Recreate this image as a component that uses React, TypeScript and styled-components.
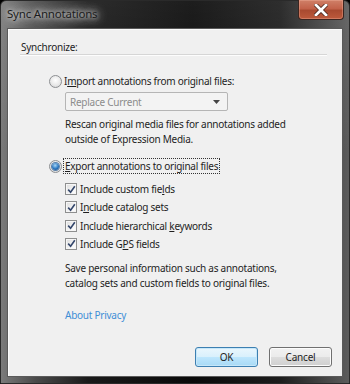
import styled, { createGlobalStyle } from 'styled-components';

const GlobalStyle = createGlobalStyle`
  html, body {
    margin: 0;
    padding: 0;
    overflow: hidden;
    background: #000;
  }
  * {
    box-sizing: border-box;
  }
`;

const FONT = `"Noto Sans", "Open Sans", sans-serif`;

export default function App() {
  return (
    <>
      <GlobalStyle />
      <StyledWindow>
        <StyledTitleBar>
          <StyledTitle>Sync Annotations</StyledTitle>
          <StyledCloseButton aria-label="Close">
            <svg width="14" height="12" viewBox="0 0 14 12">
              <path
                d="M2 1 L12 11 M12 1 L2 11"
                stroke="#3a1a12"
                strokeWidth="4.2"
                strokeLinecap="square"
              />
              <path
                d="M2 1 L12 11 M12 1 L2 11"
                stroke="#fff"
                strokeWidth="2.8"
                strokeLinecap="square"
              />
            </svg>
          </StyledCloseButton>
        </StyledTitleBar>

        <StyledClient>
          <StyledHeading>Synchronize:</StyledHeading>
          <StyledSeparator />

          <StyledOptionRow $top={18}>
            <Radio checked={false} />
            <StyledLabel>
              I<u>m</u>port annotations from original files:
            </StyledLabel>
          </StyledOptionRow>

          <StyledIndented>
            <StyledSelect>
              <span>Replace Current</span>
              <svg width="7" height="4" viewBox="0 0 7 4">
                <path d="M0 0 H7 L3.5 4 Z" fill="#444" />
              </svg>
            </StyledSelect>
            <StyledHelp $top={6}>
              Rescan original media files for annotations added
              <br />
              outside of Expression Media.
            </StyledHelp>
          </StyledIndented>

          <StyledOptionRow $top={12}>
            <Radio checked />
            <StyledFocusLabel>
              <u>E</u>xport annotations to original files
            </StyledFocusLabel>
          </StyledOptionRow>

          <StyledIndented>
            <StyledChecks>
              <CheckRow>
                Include custom fie<u>l</u>ds
              </CheckRow>
              <CheckRow>
                I<u>n</u>clude catalog sets
              </CheckRow>
              <CheckRow>
                Include hierarchical <u>k</u>eywords
              </CheckRow>
              <CheckRow>
                Include G<u>P</u>S fields
              </CheckRow>
            </StyledChecks>
            <StyledHelp $top={10}>
              Save personal information such as annotations,
              <br />
              catalog sets and custom fields to original files.
            </StyledHelp>
            <StyledLink href="#">About Privacy</StyledLink>
          </StyledIndented>

          <StyledButtonBar>
            <StyledButton $primary>OK</StyledButton>
            <StyledButton>Cancel</StyledButton>
          </StyledButtonBar>
        </StyledClient>
      </StyledWindow>
    </>
  );
}

function Radio({ checked }: { checked: boolean }) {
  return (
    <StyledRadio>
      {checked && <StyledRadioDot />}
    </StyledRadio>
  );
}

function CheckRow({ children }: { children: React.ReactNode }) {
  return (
    <StyledCheckRow>
      <StyledCheckbox>
        <svg width="9" height="9" viewBox="0 0 9 9">
          <path
            d="M1.2 4.6 L3.6 7.2 L7.8 1.2"
            fill="none"
            stroke="#33466b"
            strokeWidth="1.6"
          />
        </svg>
      </StyledCheckbox>
      <StyledLabel>{children}</StyledLabel>
    </StyledCheckRow>
  );
}

const StyledWindow = styled.div`
  width: 350px;
  height: 384px;
  display: flex;
  flex-direction: column;
  border: 1px solid #2a2a2a;
  border-radius: 6px 6px 0 0;
  background:
    linear-gradient(180deg, rgba(255, 255, 255, 0.08) 0%, rgba(0, 0, 0, 0) 40%),
    linear-gradient(90deg, #7a7a7a 0%, #4a4a4a 10%, #1a1a1a 25%, #0a0a0a 55%, #1c1c1c 80%, #5c5c5c 100%);
  font-family: ${FONT};
`;

const StyledTitleBar = styled.div`
  height: 27px;
  display: flex;
  justify-content: space-between;
  align-items: flex-start;
  padding: 0 5px 0 6px;
`;

const StyledTitle = styled.span`
  margin-top: 5px;
  font-size: 11.5px;
  color: #1c1c1c;
  text-shadow:
    0 0 4px #d8d8d8,
    0 0 8px #cfcfcf,
    0 0 12px #bdbdbd,
    0 0 16px #aaaaaa;
  letter-spacing: -0.2px;
`;

const StyledCloseButton = styled.div`
  width: 46px;
  height: 20px;
  margin-top: -1px;
  display: flex;
  align-items: center;
  justify-content: center;
  border: 1px solid #3b2520;
  border-top: none;
  border-radius: 0 0 4px 4px;
  background: linear-gradient(180deg, #d08068 0%, #c2624a 45%, #a94a30 55%, #bd5a3c 100%);
  box-shadow: inset 0 0 0 1px rgba(255, 200, 180, 0.3);
`;

const StyledClient = styled.div`
  flex: 1;
  margin: 0 6px 6px 6px;
  display: flex;
  flex-direction: column;
  padding: 11px 15px 0 13px;
  background: #f0f0f0;
  border: 1px solid #5a5a5a;
  box-shadow: inset 1px 1px 0 #fbfbfb;
  color: #1e1e1e;
  font-size: 10px;
  letter-spacing: -0.25px;
`;

const StyledHeading = styled.div`
  line-height: 14px;
`;

const StyledSeparator = styled.div`
  height: 2px;
  margin: 0 0 0 -1px;
  border-top: 1px solid #d6d6d6;
  border-bottom: 1px solid #fdfdfd;
`;

const StyledOptionRow = styled.div<{ $top: number }>`
  display: flex;
  align-items: center;
  gap: 2px;
  margin: ${({ $top }) => $top}px 0 0 28px;
  height: 14px;
`;

const StyledLabel = styled.span`
  line-height: 14px;
  white-space: nowrap;
`;

const StyledFocusLabel = styled(StyledLabel)`
  outline: 1px dotted #333;
  outline-offset: 0px;
  padding: 0 1px;
`;

const StyledRadio = styled.span`
  width: 13px;
  height: 13px;
  border-radius: 50%;
  border: 1px solid #8d8f92;
  background: radial-gradient(circle at 50% 40%, #ffffff 0%, #e9e9e9 55%, #cfd0d2 100%);
  display: flex;
  align-items: center;
  justify-content: center;
  flex-shrink: 0;
`;

const StyledRadioDot = styled.span`
  width: 7px;
  height: 7px;
  border-radius: 50%;
  background: radial-gradient(circle at 45% 35%, #a9d6f6 0%, #2a77c0 55%, #173e7a 100%);
  box-shadow: 0 0 0 1px #5a7fa8;
`;

const StyledIndented = styled.div`
  margin-left: 44px;
  display: flex;
  flex-direction: column;
  align-items: flex-start;
`;

const StyledSelect = styled.div`
  margin-top: 4px;
  width: 163px;
  height: 19px;
  display: flex;
  align-items: center;
  justify-content: space-between;
  padding: 0 7px 0 4px;
  border: 1px solid #b5b5b5;
  border-radius: 2px;
  background: #f3f3f3;
  color: #8c8c8c;
`;

const StyledHelp = styled.div<{ $top: number }>`
  margin-top: ${({ $top }) => $top}px;
  line-height: 15px;
  white-space: nowrap;
`;

const StyledChecks = styled.div`
  margin-top: 9px;
  display: flex;
  flex-direction: column;
  gap: 4.3px;
`;

const StyledCheckRow = styled.div`
  display: flex;
  align-items: center;
  gap: 3px;
  height: 14px;
`;

const StyledCheckbox = styled.span`
  width: 12px;
  height: 12px;
  border: 1px solid #8e8f8f;
  background: linear-gradient(135deg, #dcdcdc 0%, #f4f4f4 60%, #ffffff 100%);
  box-shadow: inset 0 0 0 1px #f6f6f6;
  display: flex;
  align-items: center;
  justify-content: center;
  flex-shrink: 0;
`;

const StyledLink = styled.a`
  margin-top: 17px;
  line-height: 14px;
  color: #3e8ed6;
  text-decoration: none;
`;

const StyledButtonBar = styled.div`
  margin-top: auto;
  margin-bottom: 9px;
  display: flex;
  justify-content: flex-end;
  gap: 11px;
  margin-right: -5px;
`;

const StyledButton = styled.button<{ $primary?: boolean }>`
  width: 63px;
  height: 20px;
  padding: 0;
  font-family: ${FONT};
  font-size: 10px;
  letter-spacing: -0.2px;
  color: #1e1e1e;
  border-radius: 3px;
  border: 1px solid ${({ $primary }) => ($primary ? '#3c7fb1' : '#707070')};
  background: ${({ $primary }) =>
    $primary
      ? 'linear-gradient(180deg, #eaf6fd 0%, #d9f0fc 50%, #bee6fd 51%, #a7d9f5 100%)'
      : 'linear-gradient(180deg, #f2f2f2 0%, #ebebeb 50%, #dddddd 51%, #cfcfcf 100%)'};
  box-shadow: inset 0 0 0 1px ${({ $primary }) => ($primary ? '#c6e7f9' : '#fcfcfc')};
`;
